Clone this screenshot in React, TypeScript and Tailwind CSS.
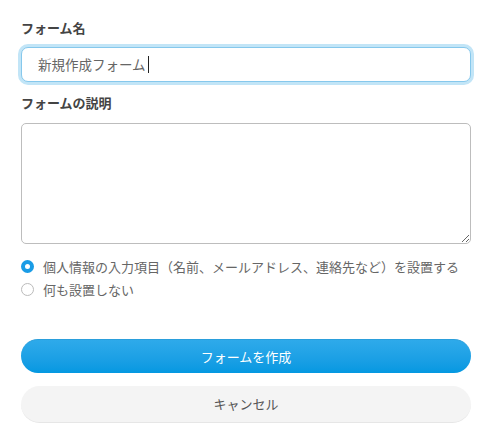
import React, { useState } from 'react';

const App: React.FC = () => {
    const [mode, setMode] = useState<'personal' | 'none'>('personal');

    return (
        <div className="min-h-screen bg-white font-['Noto_Sans_CJK_JP','Noto_Sans',sans-serif] text-[#555]">
            <div className="px-[21px] pt-[18px] pb-4 w-full">
                {/* フォーム名 */}
                <label className="block text-[13px] font-bold text-[#444] leading-[20px]">フォーム名</label>
                <div className="mt-[9px] h-[35px] rounded-[7px] border border-[#86c8ec] bg-white ring-[3px] ring-[#c2e5f7] flex items-center pl-[16px] text-[13.5px] text-[#666]">
                    <span>新規作成フォーム</span>
                    <span className="ml-[2px] w-px h-[17px] bg-[#222]" />
                </div>

                {/* フォームの説明 */}
                <label className="block mt-[11px] text-[13px] font-bold text-[#444] leading-[20px]">フォームの説明</label>
                <textarea className="mt-[10px] block w-full h-[121px] rounded-[5px] border border-[#bdbdbd] bg-white outline-none resize-y" />

                {/* 個人情報 */}
                <div className="mt-[14px] flex flex-col gap-[6px] text-[13px] text-[#666]">
                    <label className="flex items-center gap-[9px] cursor-pointer h-[17px] whitespace-nowrap" onClick={() => setMode('personal')}>
                        <span className={mode === 'personal'
                            ? "shrink-0 w-[13px] h-[13px] rounded-full border-[4px] border-[#1a9ce6] bg-white"
                            : "shrink-0 w-[13px] h-[13px] rounded-full border border-[#bbb] bg-white"} />
                        個人情報の入力項目（名前、メールアドレス、連絡先など）を設置する
                    </label>
                    <label className="flex items-center gap-[9px] cursor-pointer h-[17px] whitespace-nowrap" onClick={() => setMode('none')}>
                        <span className={mode === 'none'
                            ? "shrink-0 w-[13px] h-[13px] rounded-full border-[4px] border-[#1a9ce6] bg-white"
                            : "shrink-0 w-[13px] h-[13px] rounded-full border border-[#bbb] bg-white"} />
                        何も設置しない
                    </label>
                </div>

                <button className="mt-[41px] w-full h-[34px] rounded-full bg-gradient-to-b from-[#2eaaea] to-[#0398e1] text-white text-[13px] border-t border-[#2a9fdc]">
                    フォームを作成
                </button>
                <button className="mt-[13px] w-full h-[37px] rounded-full bg-[#f4f4f4] border-b border-[#e6e6e6] text-[#555] text-[13px]">
                    キャンセル
                </button>
            </div>
        </div>
    );
};

export default App;
